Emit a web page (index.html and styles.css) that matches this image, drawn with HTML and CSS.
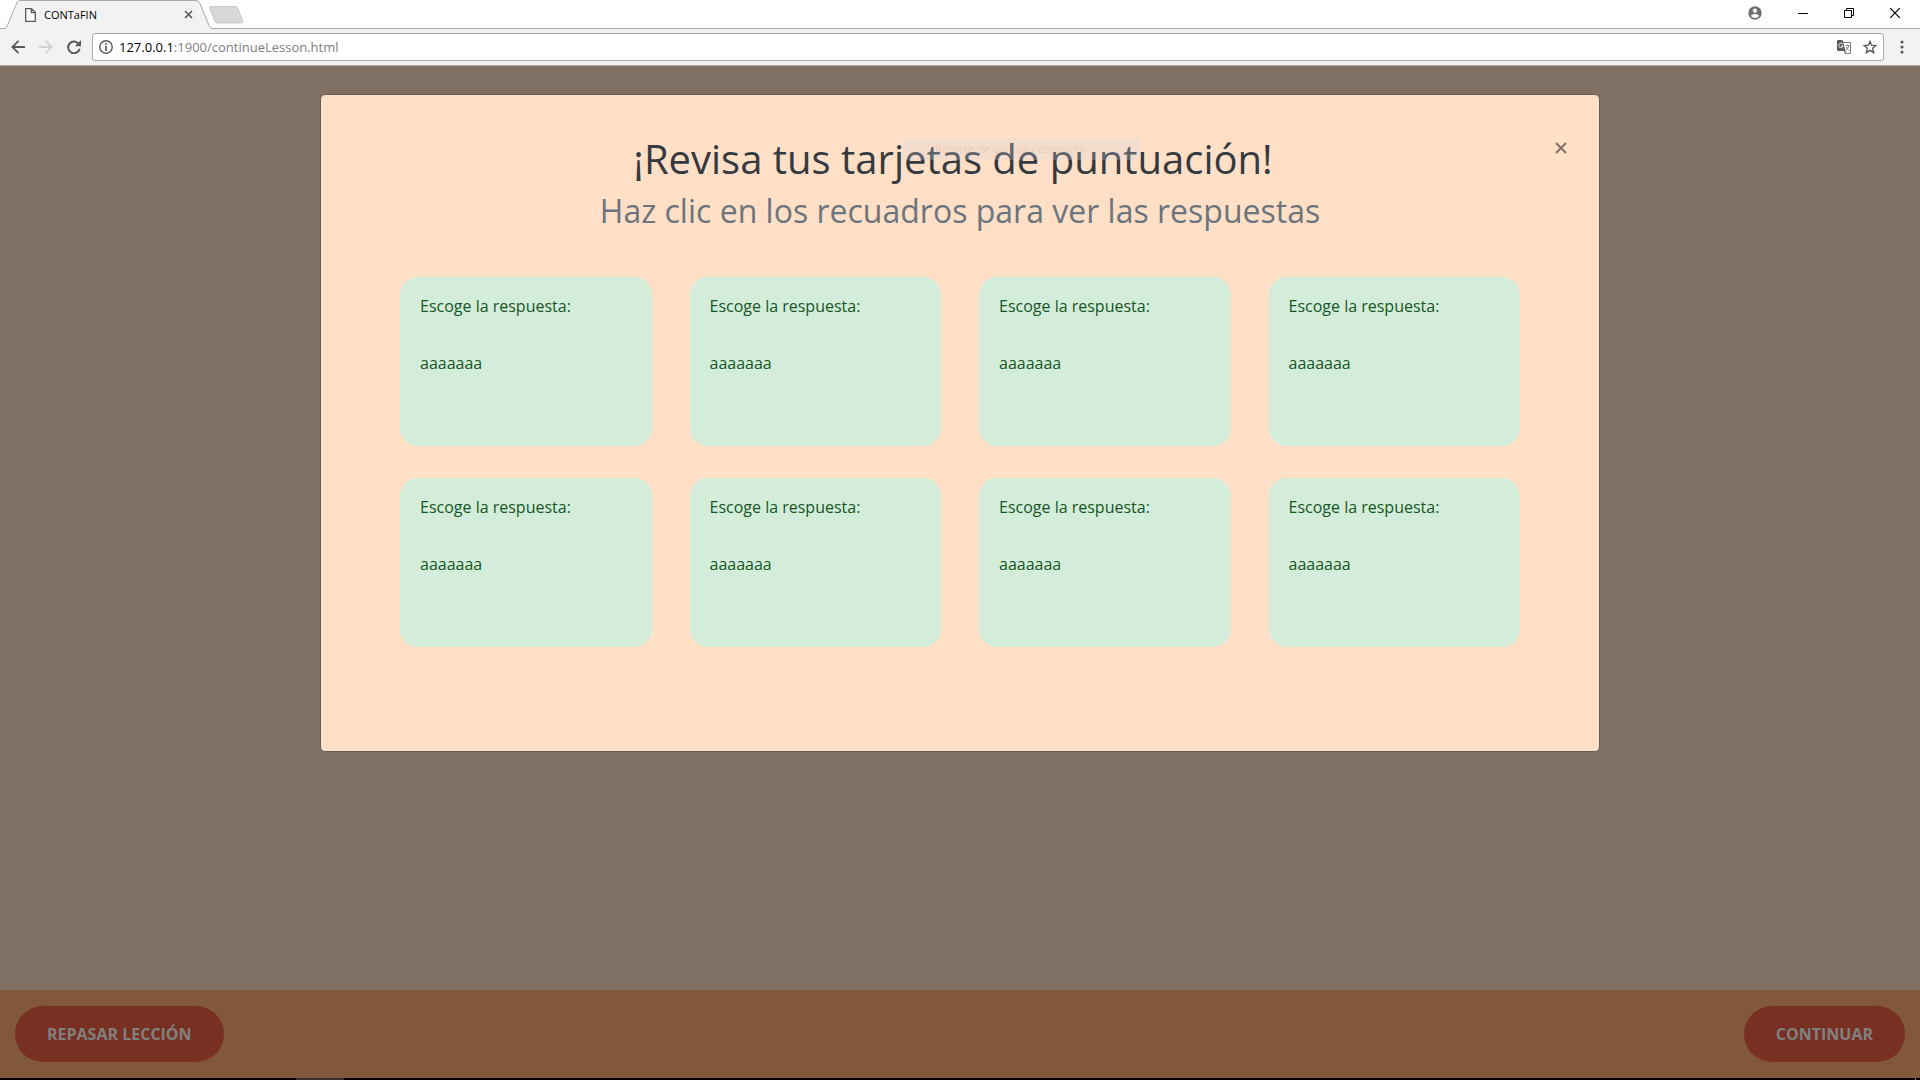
FILE: index.html
```
<!DOCTYPE html>
<html lang="es">
<head>
<meta charset="utf-8">
<meta name="viewport" content="width=device-width, initial-scale=1">
<title>CONTaFIN</title>
<link rel="stylesheet" href="styles.css">
</head>
<body>
<header class="browser">
  <div class="tab-strip">
    <div class="tab">
      <svg class="tab-shape" width="216" height="29" viewBox="0 0 216 29" aria-hidden="true"><path d="M0 29V28.500H4Q6 28.500 7 26.500L17 2.500Q18 .5 20 .5H196Q198.500 .5 199.500 2.500L209.500 26.500Q210.500 28.500 212.500 28.500H216V29Z" fill="#f2f2f2"/><path d="M0 28.500H4Q6 28.500 7 26.500L17 2.500Q18 .5 20 .5H196Q198.500 .5 199.500 2.500L209.500 26.500Q210.500 28.500 212.500 28.500H216" fill="none" stroke="#a9a9a9"/></svg>
      <svg class="tab-page" width="11" height="14" viewBox="0 0 11 14" aria-hidden="true"><path d="M.7.7H6.500L10.300 4.500V13.300H.7ZM6.300.7V4.700H10.300" fill="#fff" stroke="#5a5a5a" stroke-width="1.300"/></svg>
      <span class="tab-title">CONTaFIN</span>
      <button class="icon-button" aria-label="Cerrar pestaña"><svg width="9" height="9" viewBox="0 0 9 9"><path d="M1 1L8 8M8 1L1 8" stroke="#5a5a5a" stroke-width="1.600"/></svg></button>
    </div>
    <button class="icon-button new-tab" aria-label="Nueva pestaña"><svg width="34" height="18" viewBox="0 0 34 18"><path d="M2 .5H26Q28 .5 29 2.500L33.500 15Q34 17 32 17H8.500Q6.500 17 6 15.500L.7 2.500Q0 .5 2 .5Z" fill="#d8d8d8" stroke="#c8c8c8"/></svg></button>
    <div class="window-controls">
      <button class="icon-button" aria-label="Perfil"><svg width="14" height="14" viewBox="0 0 14 14"><circle cx="7" cy="7" r="6.700" fill="#717171"/><circle cx="7" cy="4.700" r="2.100" fill="#fff"/><path d="M2.800 9.700Q4 8 7 8T11.200 9.700Q9.800 11.900 7 11.900T2.800 9.700Z" fill="#fff"/></svg></button>
      <button class="icon-button" aria-label="Minimizar"><svg width="10" height="10" viewBox="0 0 10 10"><path d="M0 5.500H10" stroke="#000"/></svg></button>
      <button class="icon-button" aria-label="Restaurar"><svg width="10" height="10" viewBox="0 0 10 10"><path d="M.5 2.500H7.500V9.500H.5ZM2.500 2.500V.5H9.500V7.500H7.500" fill="none" stroke="#000"/></svg></button>
      <button class="icon-button" aria-label="Cerrar"><svg width="10" height="10" viewBox="0 0 10 10"><path d="M0 0L10 10M10 0L0 10" stroke="#000" stroke-width="1.200"/></svg></button>
    </div>
  </div>
  <div class="toolbar">
    <button class="icon-button" aria-label="Atrás"><svg width="14" height="14" viewBox="0 0 14 14"><path d="M14 7H1.500M7.500.8L1.300 7L7.500 13.200" fill="none" stroke="#5a5a5a" stroke-width="1.900"/></svg></button>
    <button class="icon-button" aria-label="Adelante"><svg width="14" height="14" viewBox="0 0 14 14"><path d="M0 7H12.500M6.500.8L12.700 7L6.500 13.200" fill="none" stroke="#d2d2d2" stroke-width="1.900"/></svg></button>
    <button class="icon-button" aria-label="Recargar"><svg width="14" height="14" viewBox="0 0 14 14"><path d="M11.800 4.200A5.800 5.800 0 1 0 12.600 8.700" fill="none" stroke="#5a5a5a" stroke-width="2"/><path d="M14 0V6.200H7.800Z" fill="#5a5a5a"/></svg></button>
    <div class="address">
      <svg width="14" height="14" viewBox="0 0 14 14" aria-hidden="true"><circle cx="7" cy="7" r="6.200" fill="none" stroke="#5a5a5a" stroke-width="1.400"/><path d="M7 3V4.700M7 6V11" stroke="#5a5a5a" stroke-width="1.700"/></svg>
      <a class="url" href="#"><span class="url-host">127.0.0.1</span>:1900/continueLesson.html</a>
      <button class="icon-button" aria-label="Traducir"><svg width="14" height="14" viewBox="0 0 14 14"><path d="M5 2.500H13.500V13.500H8Z" fill="#fff" stroke="#777"/><path d="M0 1Q0 0 1 0H5.500L8.500 11H1Q0 11 0 10Z" fill="#5a5a5a"/><path d="M5.800 4.200A2.200 2.200 0 1 0 6 6H4" fill="none" stroke="#fff"/><path d="M8.500 5.500H12.500M10.500 4.500V5.500M12 5.500Q11 9 8.500 10M9 7L12 10.500M8 13L9.500 11" fill="none" stroke="#888"/></svg></button>
      <button class="icon-button" aria-label="Favoritos"><svg width="14" height="14" viewBox="0 0 14 14"><path d="M7 1.500L8.600 5.200L12.900 5.600L9.600 8.300L10.700 12.700L7 10.300L3.300 12.700L4.400 8.300L1.100 5.600L5.400 5.200Z" fill="none" stroke="#5a5a5a" stroke-width="1.400"/></svg></button>
    </div>
    <button class="icon-button" aria-label="Menú"><svg width="4" height="14" viewBox="0 0 4 14"><g fill="#5a5a5a"><circle cx="2" cy="2" r="1.600"/><circle cx="2" cy="7" r="1.600"/><circle cx="2" cy="12" r="1.600"/></g></svg></button>
  </div>
</header>
<main class="page">
  <section class="modal" role="dialog" aria-labelledby="modal-title">
    <div class="modal-header">
      <h1 class="modal-title" id="modal-title">¡Revisa tus tarjetas de puntuación!</h1>
      <button class="icon-button modal-close" aria-label="Cerrar tarjetas"><svg width="12" height="12" viewBox="0 0 12 12"><path d="M1 1L11 11M11 1L1 11" stroke="#806f63" stroke-width="2"/></svg></button>
      <span class="capture-tip">Recorte de pantalla completa</span>
    </div>
    <p class="modal-subtitle">Haz clic en los recuadros para ver las respuestas</p>
    <div class="cards">
      <button class="card"><span>Escoge la respuesta:</span><span class="answer">aaaaaaa</span></button>
      <button class="card"><span>Escoge la respuesta:</span><span class="answer">aaaaaaa</span></button>
      <button class="card"><span>Escoge la respuesta:</span><span class="answer">aaaaaaa</span></button>
      <button class="card"><span>Escoge la respuesta:</span><span class="answer">aaaaaaa</span></button>
      <button class="card"><span>Escoge la respuesta:</span><span class="answer">aaaaaaa</span></button>
      <button class="card"><span>Escoge la respuesta:</span><span class="answer">aaaaaaa</span></button>
      <button class="card"><span>Escoge la respuesta:</span><span class="answer">aaaaaaa</span></button>
      <button class="card"><span>Escoge la respuesta:</span><span class="answer">aaaaaaa</span></button>
    </div>
  </section>
</main>
<footer class="lesson-bar">
  <button class="pill">REPASAR LECCIÓN</button>
  <button class="pill">CONTINUAR</button>
</footer>
<div class="taskbar"><span class="taskbar-app"></span><span class="taskbar-edge"></span></div>
</body>
</html>
```
FILE: styles.css
```
* { box-sizing: border-box; }

body {
  margin: 0;
  min-height: 100vh;
  display: flex;
  flex-direction: column;
  background: #807063;
  font: 16px/24px "Open Sans", "Noto Sans", sans-serif;
}

button { font: inherit; border: 0; cursor: pointer; }

.icon-button {
  display: flex;
  flex: none;
  padding: 0;
  background: none;
}

svg { display: block; flex: none; }

/* Browser frame */
.browser { background: #f2f2f2; border-bottom: 1px solid #b0aaa5; }

.tab-strip {
  display: flex;
  align-items: center;
  height: 29px;
  background: #fff;
  border-bottom: 1px solid #a9a9a9;
}

.tab {
  position: relative;
  display: flex;
  align-items: center;
  gap: 8px;
  width: 209px;
  height: 29px;
  padding: 1px 16px 0 25px;
  font-size: 11px;
}

.tab-shape { position: absolute; left: 0; top: 0; }
.tab-page, .tab-title, .tab .icon-button { position: relative; }
.tab-title { flex: 1; }
.new-tab { margin-top: 2px; }

.window-controls {
  display: flex;
  align-items: center;
  gap: 36px;
  margin-left: auto;
  padding: 0 20px 2px 0;
}

.toolbar {
  display: flex;
  align-items: center;
  gap: 14px;
  padding: 4px 16px 4px 11px;
}

.address {
  flex: 1;
  display: flex;
  align-items: center;
  gap: 12px;
  height: 28px;
  margin: 0 2px 0 -3px;
  padding: 0 6px;
  background: #fff;
  border: 1px solid #a9a9a9;
  border-radius: 3px;
}

.url {
  flex: 1;
  margin-left: -6px;
  color: #808080;
  font-size: 13px;
  text-decoration: none;
}

.url-host { color: #000; }

/* Score cards */
.page { flex: 1; padding: 28px 24px; }

.modal {
  width: 90%;
  max-width: 1280px;
  margin: 0 auto;
  padding: 40px 32px 104px;
  background: #ffdfc6;
  border: 1px solid #665a4f;
  border-radius: 5px;
}

.modal-header {
  position: relative;
  display: flex;
  align-items: flex-start;
}

.modal-title {
  flex: 1;
  margin: 0;
  color: #343a40;
  font-size: 40px;
  font-weight: 400;
  line-height: 48px;
  text-align: center;
}

.modal-close { padding: 7px 0 0 2px; }

.modal-subtitle {
  margin: 0;
  color: #6c757d;
  font-size: 32px;
  line-height: 56px;
  text-align: center;
}

.capture-tip {
  position: absolute;
  top: 3px;
  left: 550px;
  width: 238px;
  padding-left: 32px;
  background: rgb(216 216 232 / 25%);
  color: rgb(220 150 110 / 28%);
  font-size: 11px;
  line-height: 22px;
}

.cards {
  display: grid;
  grid-template-columns: repeat(4, 1fr);
  gap: 32px 38px;
  padding: 38px 47px 0;
}

.card {
  display: flex;
  flex-direction: column;
  gap: 33px;
  padding: 17px 20px 71px;
  background: #d4edda;
  border-radius: 18px;
  color: #155724;
  text-align: left;
}

.answer { font-weight: 500; }

/* Lesson actions */
.lesson-bar {
  display: flex;
  justify-content: space-between;
  padding: 16px 15px;
  background: #815839;
}

.pill {
  padding: 16px 32px;
  background: #783022;
  border-radius: 28px;
  color: #808080;
  font-weight: 700;
}

.taskbar {
  display: flex;
  justify-content: space-between;
  height: 2px;
  padding: 0 4px 0 296px;
  background: #000;
}

.taskbar-app { width: 48px; background: #333; }
.taskbar-edge { width: 1px; background: #777; }
```
